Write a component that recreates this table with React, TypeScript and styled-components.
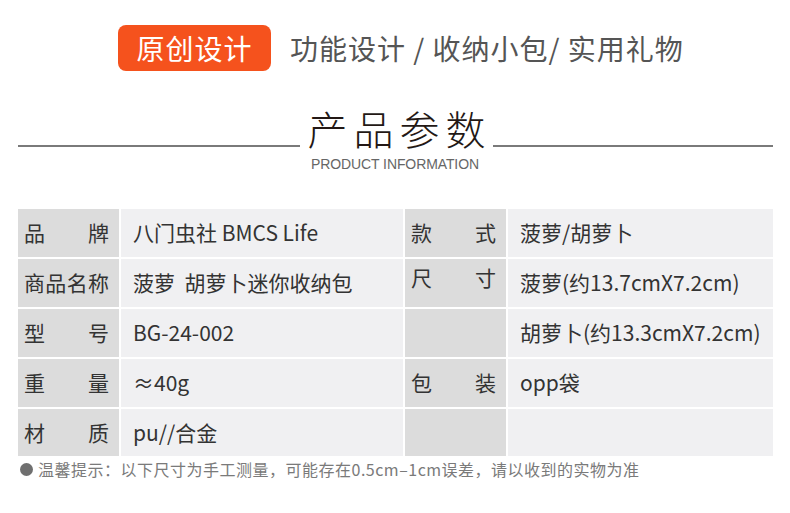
import React from "react";
import styled, { createGlobalStyle } from "styled-components";

const Global = createGlobalStyle`
  html, body { margin: 0; padding: 0; background: #ffffff; }
  body { font-family: "Noto Sans CJK SC", "Noto Sans", sans-serif; }
`;

const Page = styled.div`
  width: 790px;
  height: 513px;
  background: #fff;
  padding-top: 25px;
  box-sizing: border-box;
  overflow: hidden;
`;

const TopBar = styled.div`
  display: flex;
  align-items: center;
  gap: 19px;
  padding-left: 118px;
  height: 46px;
`;

const Badge = styled.div`
  width: 153px;
  height: 46px;
  border-radius: 8px;
  background: #f5521d;
  color: #fff;
  font-size: 28px;
  line-height: 1;
  letter-spacing: 1px;
  display: flex;
  align-items: center;
  justify-content: center;
`;

const Tagline = styled.div`
  font-size: 28px;
  line-height: 1;
  color: #555;
  letter-spacing: 1px;
  white-space: nowrap;
`;

const TitleRow = styled.div`
  display: flex;
  align-items: flex-end;
  margin-top: 37px;
  padding-left: 18px;
  width: 755px;
`;

const Rule = styled.div<{ $w: number }>`
  width: ${(p) => p.$w}px;
  height: 2px;
  background: #7a7a7a;
  flex: none;
`;

const Title = styled.div`
  flex: 1;
  text-align: center;
  font-size: 40px;
  font-weight: 300;
  line-height: 1;
  color: #231815;
  letter-spacing: 6px;
  padding-left: 6px;
  margin-bottom: -1px;
`;

const SubTitle = styled.div`
  margin-top: 9px;
  text-align: center;
  width: 790px;
  font-family: "Liberation Sans", Arial, sans-serif;
  font-size: 14px;
  line-height: 16px;
  color: #666;
  letter-spacing: -0.1px;
`;

const Table = styled.div`
  margin-top: 37px;
  margin-left: 18px;
  display: grid;
  grid-template-columns: 101px 282px 101px 265px;
  grid-template-rows: 48px 48px 48px 48px 47px;
  gap: 2px;
  width: 755px;
`;

const Cell = styled.div<{ $label?: boolean; $top?: boolean }>`
  background: ${(p) => (p.$label ? "#dcdcdc" : "#f0f0f2")};
  color: #333;
  font-size: 21px;
  line-height: 1.2;
  display: flex;
  align-items: ${(p) => (p.$top ? "flex-start" : "center")};
  padding: ${(p) =>
    p.$label ? (p.$top ? "6px 10px 0 6px" : "0 10px 0 6px") : "0 0 0 12px"};
  white-space: pre;
  box-sizing: border-box;
`;

const Justify = styled.span`
  display: block;
  width: 100%;
  text-align: justify;
  text-align-last: justify;
`;

const Note = styled.div`
  margin-top: 3px;
  padding-left: 20px;
  display: flex;
  align-items: center;
  gap: 5px;
  font-size: 16px;
  line-height: 20px;
  letter-spacing: 0.5px;
  color: #7a7a7a;
  white-space: nowrap;
`;

const Dot = styled.span`
  width: 13px;
  height: 13px;
  border-radius: 50%;
  background: #6f6f6f;
  flex: none;
`;

type Row = [string, string, string, string, boolean?];

const rows: Row[] = [
  ["品牌", "八门虫社 BMCS Life", "款式", "菠萝/胡萝卜"],
  ["商品名称", "菠萝  胡萝卜迷你收纳包", "尺寸", "菠萝(约13.7cmX7.2cm)", true],
  ["型号", "BG-24-002", "", "胡萝卜(约13.3cmX7.2cm)"],
  ["重量", "≈40g", "包装", "opp袋"],
  ["材质", "pu//合金", "", ""],
];

export default function App() {
  return (
    <Page>
      <Global />
      <TopBar>
        <Badge>原创设计</Badge>
        <Tagline>功能设计 / 收纳小包/ 实用礼物</Tagline>
      </TopBar>
      <TitleRow>
        <Rule $w={282} />
        <Title>产品参数</Title>
        <Rule $w={280} />
      </TitleRow>
      <SubTitle>PRODUCT INFORMATION</SubTitle>
      <Table>
        {rows.map((r, i) => (
          <React.Fragment key={i}>
            <Cell $label>
              <Justify>{r[0]}</Justify>
            </Cell>
            <Cell>{r[1]}</Cell>
            <Cell $label $top={!!r[4]}>
              <Justify>{r[2]}</Justify>
            </Cell>
            <Cell>{r[3]}</Cell>
          </React.Fragment>
        ))}
      </Table>
      <Note>
        <Dot />
        <span>温馨提示：以下尺寸为手工测量，可能存在0.5cm–1cm误差，请以收到的实物为准</span>
      </Note>
    </Page>
  );
}
